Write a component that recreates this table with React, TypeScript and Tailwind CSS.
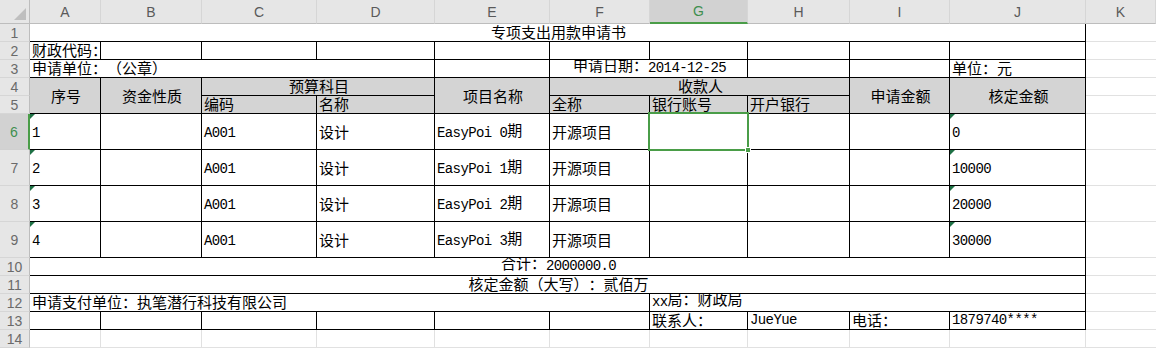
import React from 'react';

const GREEN = 'border-[#4a9d48]';

const cols = ['A', 'B', 'C', 'D', 'E', 'F', 'G', 'H', 'I', 'J', 'K'];

// 宋体里的半角字符用等宽字体代替
const M = ({ children }: { children: React.ReactNode }) => (
  <span className="align-[-1px] font-['Liberation_Mono',monospace] text-[14px] tracking-[-0.6px]">{children}</span>
);

type CellProps = {
  span?: string;
  edge?: boolean;
  fill?: boolean;
  h?: string;
  v?: string;
  tick?: boolean;
  children?: React.ReactNode;
};

function Cell({ span = '', edge = true, fill = false, h = 'justify-start', v = 'items-end', tick = false, children }: CellProps) {
  return (
    <div
      className={`relative flex min-w-0 overflow-hidden whitespace-nowrap border-r border-b pl-[2px] text-[15px] leading-[18px] text-black ${span} ${h} ${v} ${
        edge ? 'border-black' : 'border-[#e1e1e1]'
      } ${fill ? 'bg-[#d4d4d4]' : 'bg-white'}`}
    >
      {tick && (
        <span className="absolute left-0 top-0 h-0 w-0 border-r-[5px] border-t-[5px] border-r-transparent border-t-[#1e7145]" />
      )}
      {children !== undefined && <span>{children}</span>}
    </div>
  );
}

function Blank() {
  return <div className="border-b border-[#e1e1e1] bg-white" />;
}

function RowHead({ n, active = false }: { n: number; active?: boolean }) {
  return (
    <div
      className={`flex items-center justify-center border-b border-r font-['Liberation_Sans',sans-serif] text-[14px] leading-none ${
        active
          ? `border-b-[#d0d0d0] border-r-2 border-r-[#4a9d48] bg-[#d2d2d2] text-[#3f8f4f]`
          : 'border-b-[#d6d6d6] border-r-[#bdbdbd] bg-[#e6e6e6] text-[#6a6a6a]'
      }`}
    >
      {n}
    </div>
  );
}

const data = [
  { n: 6, no: '1', phase: '0', amt: '0' },
  { n: 7, no: '2', phase: '1', amt: '10000' },
  { n: 8, no: '3', phase: '2', amt: '20000' },
  { n: 9, no: '4', phase: '3', amt: '30000' },
];

export default function App() {
  return (
    <div className="h-[348px] w-[1156px] overflow-hidden bg-white font-['Noto_Sans_CJK_SC','Liberation_Sans',sans-serif] [text-spacing-trim:space-all]">
      <div className="grid grid-cols-[30px_71px_101px_115px_118px_115px_100px_98px_102px_100px_136px_1fr] grid-rows-[24px_repeat(5,18px)_repeat(4,36px)_repeat(5,18px)]">
        {/* 列标题 */}
        <div className="relative border-b border-r border-b-[#bdbdbd] border-r-[#bdbdbd] bg-[#e6e6e6]">
          <span className="absolute bottom-[3px] right-[3px] h-0 w-0 border-b-[12px] border-l-[12px] border-b-[#bfbfbf] border-l-transparent" />
        </div>
        {cols.map((c) => (
          <div
            key={c}
            className={`flex items-center justify-center border-r font-['Liberation_Sans',sans-serif] text-[14px] leading-none ${
              c === 'G'
                ? `border-b-2 ${GREEN} border-r-[#d6d6d6] bg-[#d2d2d2] text-[#3f8f4f]`
                : 'border-b border-b-[#bdbdbd] border-r-[#d6d6d6] bg-[#e6e6e6] text-[#5a5a5a]'
            }`}
          >
            {c}
          </div>
        ))}

        {/* 1 */}
        <RowHead n={1} />
        <Cell span="col-span-10" h="justify-center">专项支出用款申请书</Cell>
        <Blank />

        {/* 2 */}
        <RowHead n={2} />
        <Cell>财政代码：</Cell>
        <Cell />
        <Cell />
        <Cell />
        <Cell />
        <Cell />
        <Cell />
        <Cell />
        <Cell />
        <Cell />
        <Blank />

        {/* 3 */}
        <RowHead n={3} />
        <Cell span="col-span-4">申请单位：（公章）</Cell>
        <Cell />
        <Cell span="col-span-2" h="justify-center">
          申请日期：<M>2014-12-25</M>
        </Cell>
        <Cell />
        <Cell />
        <Cell>单位：元</Cell>
        <Blank />

        {/* 4 */}
        <RowHead n={4} />
        <Cell span="row-span-2" fill h="justify-center" v="items-center">序号</Cell>
        <Cell span="row-span-2" fill h="justify-center" v="items-center">资金性质</Cell>
        <Cell span="col-span-2" fill h="justify-center">预算科目</Cell>
        <Cell span="row-span-2" fill h="justify-center" v="items-center">项目名称</Cell>
        <Cell span="col-span-3" fill h="justify-center">收款人</Cell>
        <Cell span="row-span-2" fill h="justify-center" v="items-center">申请金额</Cell>
        <Cell span="row-span-2" fill h="justify-center" v="items-center">核定金额</Cell>
        <Blank />

        {/* 5 */}
        <RowHead n={5} />
        <Cell fill>编码</Cell>
        <Cell fill>名称</Cell>
        <Cell fill>全称</Cell>
        <Cell fill>银行账号</Cell>
        <Cell fill>开户银行</Cell>
        <Blank />

        {/* 6-9 */}
        {data.map((r) => (
          <React.Fragment key={r.n}>
            <RowHead n={r.n} active={r.n === 6} />
            <Cell v="items-center" tick>
              <M>{r.no}</M>
            </Cell>
            <Cell />
            <Cell v="items-center">
              <M>A001</M>
            </Cell>
            <Cell v="items-center">设计</Cell>
            <Cell v="items-center">
              <M>EasyPoi {r.phase}</M>期
            </Cell>
            <Cell v="items-center">开源项目</Cell>
            {r.n === 6 ? (
              <div className="relative border-b border-r border-black bg-white">
                <div className={`absolute -inset-[2px] z-10 border-2 ${GREEN}`}>
                  <span className="absolute -bottom-[4px] -right-[4px] h-[6px] w-[6px] border border-white bg-[#4a9d48]" />
                </div>
              </div>
            ) : (
              <Cell />
            )}
            <Cell />
            <Cell />
            <Cell v="items-center" tick>
              <M>{r.amt}</M>
            </Cell>
            <Blank />
          </React.Fragment>
        ))}

        {/* 10 */}
        <RowHead n={10} />
        <Cell span="col-span-10" h="justify-center">
          合计：<M>2000000.0</M>
        </Cell>
        <Blank />

        {/* 11 */}
        <RowHead n={11} />
        <Cell span="col-span-10" h="justify-center">核定金额（大写）：贰佰万</Cell>
        <Blank />

        {/* 12 */}
        <RowHead n={12} />
        <Cell span="col-span-6">申请支付单位：执笔潜行科技有限公司</Cell>
        <Cell span="col-span-4">
          <M>xx</M>局：财政局
        </Cell>
        <Blank />

        {/* 13 */}
        <RowHead n={13} />
        <Cell />
        <Cell />
        <Cell />
        <Cell />
        <Cell />
        <Cell />
        <Cell>联系人：</Cell>
        <Cell>
          <M>JueYue</M>
        </Cell>
        <Cell>电话：</Cell>
        <Cell>
          <M>1879740****</M>
        </Cell>
        <Blank />

        {/* 14 */}
        <RowHead n={14} />
        {cols.slice(0, 10).map((c) => (
          <Cell key={c} edge={false} />
        ))}
        <Blank />
      </div>
    </div>
  );
}
